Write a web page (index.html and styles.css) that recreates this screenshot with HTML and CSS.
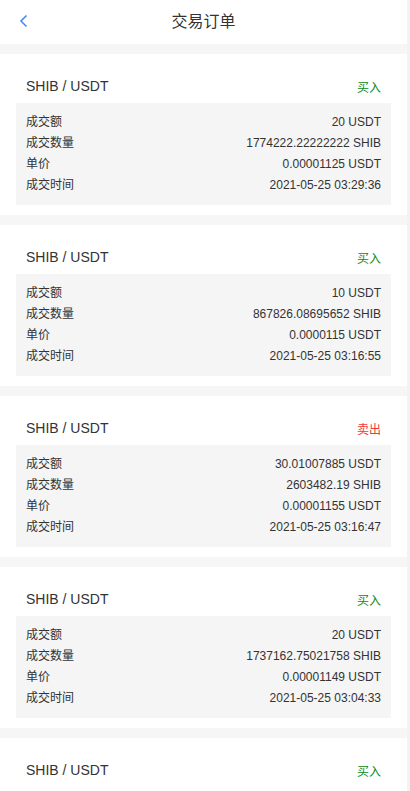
FILE: index.html
```html
<!DOCTYPE html>
<html lang="zh">
<head>
<meta charset="utf-8">
<title>交易订单</title>
<link rel="stylesheet" href="styles.css">
</head>
<body>
<div class="app">
  <main class="page">
    <header class="navbar">
      <span class="back">
        <svg width="10" height="14" viewBox="0 0 10 14"><path d="M7.5 1.5 L2 7 L7.5 12.5" fill="none" stroke="#4d86f7" stroke-width="1.6"/></svg>
      </span>
      <h1 class="nav-title">交易订单</h1>
    </header>

    <section class="card">
      <div class="card-head"><span class="pair">SHIB / USDT</span><span class="side buy">买入</span></div>
      <div class="detail">
        <div class="row"><span>成交额</span><span>20 USDT</span></div>
        <div class="row"><span>成交数量</span><span>1774222.22222222 SHIB</span></div>
        <div class="row"><span>单价</span><span>0.00001125 USDT</span></div>
        <div class="row"><span>成交时间</span><span>2021-05-25 03:29:36</span></div>
      </div>
    </section>

    <section class="card">
      <div class="card-head"><span class="pair">SHIB / USDT</span><span class="side buy">买入</span></div>
      <div class="detail">
        <div class="row"><span>成交额</span><span>10 USDT</span></div>
        <div class="row"><span>成交数量</span><span>867826.08695652 SHIB</span></div>
        <div class="row"><span>单价</span><span>0.0000115 USDT</span></div>
        <div class="row"><span>成交时间</span><span>2021-05-25 03:16:55</span></div>
      </div>
    </section>

    <section class="card">
      <div class="card-head"><span class="pair">SHIB / USDT</span><span class="side sell">卖出</span></div>
      <div class="detail">
        <div class="row"><span>成交额</span><span>30.01007885 USDT</span></div>
        <div class="row"><span>成交数量</span><span>2603482.19 SHIB</span></div>
        <div class="row"><span>单价</span><span>0.00001155 USDT</span></div>
        <div class="row"><span>成交时间</span><span>2021-05-25 03:16:47</span></div>
      </div>
    </section>

    <section class="card">
      <div class="card-head"><span class="pair">SHIB / USDT</span><span class="side buy">买入</span></div>
      <div class="detail">
        <div class="row"><span>成交额</span><span>20 USDT</span></div>
        <div class="row"><span>成交数量</span><span>1737162.75021758 SHIB</span></div>
        <div class="row"><span>单价</span><span>0.00001149 USDT</span></div>
        <div class="row"><span>成交时间</span><span>2021-05-25 03:04:33</span></div>
      </div>
    </section>

    <section class="card last">
      <div class="card-head"><span class="pair">SHIB / USDT</span><span class="side buy">买入</span></div>
    </section>
  </main>
  <div class="scroll-strip"></div>
</div>
</body>
</html>
```

FILE: styles.css
```css
html, body {
  margin: 0;
  padding: 0;
  height: 100%;
  overflow: hidden;
}
body {
  font-family: "Liberation Sans", Arial, "Noto Sans CJK SC", sans-serif;
  color: #333;
  background: #f6f6f6;
}
.app {
  display: flex;
  height: 791px;
  overflow: hidden;
}
.page {
  flex: 1;
  display: flex;
  flex-direction: column;
  gap: 10px;
  background: #f6f6f6;
}
.scroll-strip {
  width: 3px;
  background: #f3f3f3;
}
.navbar {
  height: 44px;
  flex-shrink: 0;
  background: #fff;
  display: flex;
  align-items: center;
  justify-content: center;
  position: relative;
}
.back {
  position: absolute;
  left: 19px;
  top: 14px;
  display: flex;
}
.nav-title {
  margin: 0;
  font-size: 16px;
  font-weight: normal;
  color: #333;
  line-height: 22px;
}
.card {
  flex-shrink: 0;
  background: #fff;
  padding: 22px 16px 10px;
}
.card.last {
  padding-bottom: 20px;
}
.card-head {
  display: flex;
  justify-content: space-between;
  align-items: center;
  height: 20px;
  padding: 0 10px;
  margin-bottom: 7px;
}
.pair {
  font-size: 14px;
  color: #333;
}
.side {
  font-size: 12px;
}
.side.buy { color: #0b8a17; }
.side.sell { color: #f23a3a; }
.detail {
  background: #f5f5f5;
  padding: 9px 10px;
}
.row {
  display: flex;
  justify-content: space-between;
  font-size: 12px;
  line-height: 21px;
  height: 21px;
  color: #333;
}
```
